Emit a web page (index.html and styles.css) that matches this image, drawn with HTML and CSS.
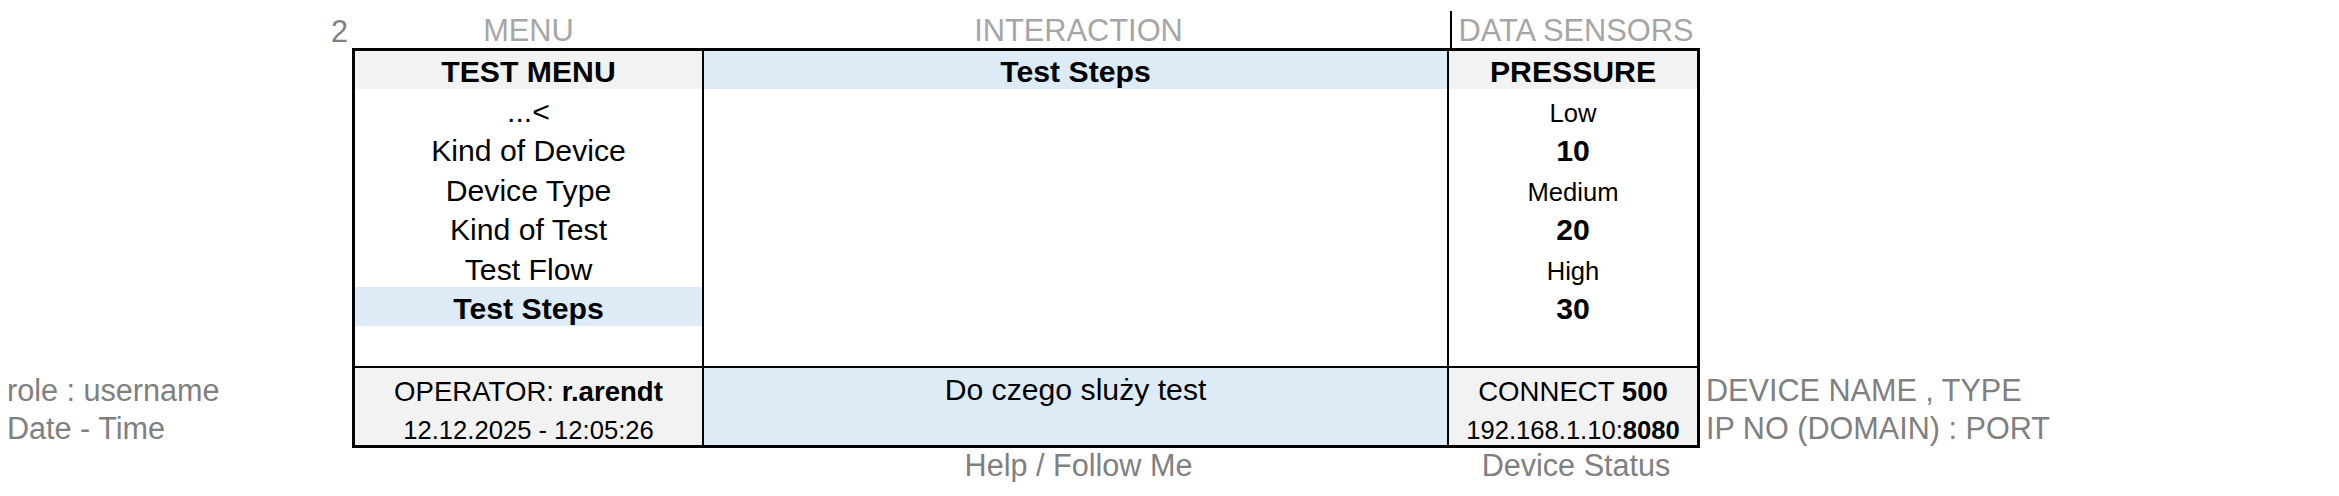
FILE: index.html
```html
<!DOCTYPE html>
<html lang="pl">
<head>
<meta charset="utf-8">
<title>Test Menu</title>
<link rel="stylesheet" href="styles.css">
</head>
<body>
<div class="page">
  <!-- label row -->
  <div class="corner"><span class="num">2</span></div>
  <div class="heads">
    <div class="head h-menu">MENU</div>
    <div class="head h-inter">INTERACTION</div>
    <div class="head h-data">DATA SENSORS</div>
  </div>
  <div class="blank"></div>

  <!-- table row -->
  <div class="side side-left">
    <div class="side-line">role : username</div>
    <div class="side-line">Date - Time</div>
  </div>
  <div class="table">
    <div class="col col-menu">
      <div class="cell hdr grey bold"><span>TEST MENU</span></div>
      <div class="body">
        <div class="cell row"><span>...&lt;</span></div>
        <div class="cell row"><span>Kind of Device</span></div>
        <div class="cell row"><span>Device Type</span></div>
        <div class="cell row"><span>Kind of Test</span></div>
        <div class="cell row"><span>Test Flow</span></div>
        <div class="cell row blue bold"><span>Test Steps</span></div>
        <div class="cell row last"></div>
      </div>
      <div class="foot grey">
        <div class="cell frow mid"><span>OPERATOR: <b>r.arendt</b></span></div>
        <div class="cell frow small"><span>12.12.2025 - 12:05:26</span></div>
      </div>
    </div>
    <div class="col col-inter">
      <div class="cell hdr blue bold"><span>Test Steps</span></div>
      <div class="body"></div>
      <div class="foot blue">
        <div class="cell frow"><span>Do czego sluży test</span></div>
        <div class="cell frow"></div>
      </div>
    </div>
    <div class="col col-data">
      <div class="cell hdr grey bold"><span>PRESSURE</span></div>
      <div class="body">
        <div class="cell row small"><span>Low</span></div>
        <div class="cell row bold"><span>10</span></div>
        <div class="cell row small"><span>Medium</span></div>
        <div class="cell row bold"><span>20</span></div>
        <div class="cell row small"><span>High</span></div>
        <div class="cell row bold"><span>30</span></div>
        <div class="cell row last"></div>
      </div>
      <div class="foot grey">
        <div class="cell frow mid"><span>CONNECT <b>500</b></span></div>
        <div class="cell frow small"><span>192.168.1.10:<b>8080</b></span></div>
      </div>
    </div>
  </div>
  <div class="side side-right">
    <div class="side-line">DEVICE NAME , TYPE</div>
    <div class="side-line">IP NO (DOMAIN) : PORT</div>
  </div>

  <!-- below row -->
  <div class="blank"></div>
  <div class="below">
    <div class="under u-menu"></div>
    <div class="under u-inter">Help / Follow Me</div>
    <div class="under u-data">Device Status</div>
  </div>
  <div class="blank"></div>
</div>
</body>
</html>
```
FILE: styles.css
```css
html, body {
  margin: 0;
  padding: 0;
  background: #ffffff;
}

body {
  font-family: "Liberation Sans", Arial, sans-serif;
  font-size: 30.2px;
  color: #000000;
}

.page {
  display: grid;
  grid-template-columns: 352px 1348px 1fr;
  grid-template-rows: 48px 400px auto;
}

/* label row */
.corner {
  display: flex;
  align-items: flex-end;
  justify-content: flex-end;
  padding-right: 4px;
  color: #808080;
  font-size: 30.6px;
  line-height: 34px;
}

.heads {
  display: grid;
  grid-template-columns: 350px 745px 250px;
  padding-left: 3px;
  box-sizing: border-box;
}

.head {
  display: flex;
  align-items: flex-end;
  justify-content: center;
  color: #a6a6a6;
  font-size: 30.8px;
  line-height: 34px;
  white-space: nowrap;
}

.h-menu {
  margin-left: -3px;
}

.h-inter {
  padding-left: 2px;
}

.h-data {
  margin-top: 11px;
  border-left: 2px solid #000;
}

/* side labels */
.side {
  display: flex;
  flex-direction: column;
  justify-content: flex-end;
  padding-bottom: 3px;
  color: #808080;
  font-size: 30.6px;
}

.side-line {
  height: 38.5px;
  display: flex;
  align-items: flex-end;
  line-height: 34px;
  white-space: nowrap;
}

.side-left {
  padding-left: 7px;
}

.side-right {
  padding-left: 6px;
}

/* table */
.table {
  border: 3px solid #000;
  display: grid;
  grid-template-columns: 347px 745px 250px;
  box-sizing: border-box;
}

.col {
  display: flex;
  flex-direction: column;
}

.col-inter,
.col-data {
  border-left: 2px solid #000;
}

.cell {
  display: flex;
  align-items: flex-end;
  justify-content: center;
  line-height: 34px;
  white-space: nowrap;
}

.hdr {
  height: 38px;
}

.body {
  height: 277px;
  display: flex;
  flex-direction: column;
}

.row {
  height: 39.5px;
}

.row.last {
  height: 40px;
}

.foot {
  border-top: 2px solid #000;
  height: 77px;
  display: flex;
  flex-direction: column;
}

.frow {
  height: 38.5px;
}

.grey {
  background: #f2f2f2;
}

.blue {
  background: #ddebf7;
}

.bold {
  font-weight: bold;
}

.small {
  font-size: 25.6px;
  line-height: 30px;
}

.mid {
  font-size: 27.6px;
  line-height: 31px;
}

.row.small {
  padding-bottom: 1px;
}

/* below row */
.below {
  display: grid;
  grid-template-columns: 350px 745px 250px;
  padding-left: 3px;
}

.under {
  display: flex;
  justify-content: center;
  color: #808080;
  font-size: 30.6px;
  line-height: 34px;
  white-space: nowrap;
}

.u-inter,
.u-data {
  padding-left: 2px;
}
```
